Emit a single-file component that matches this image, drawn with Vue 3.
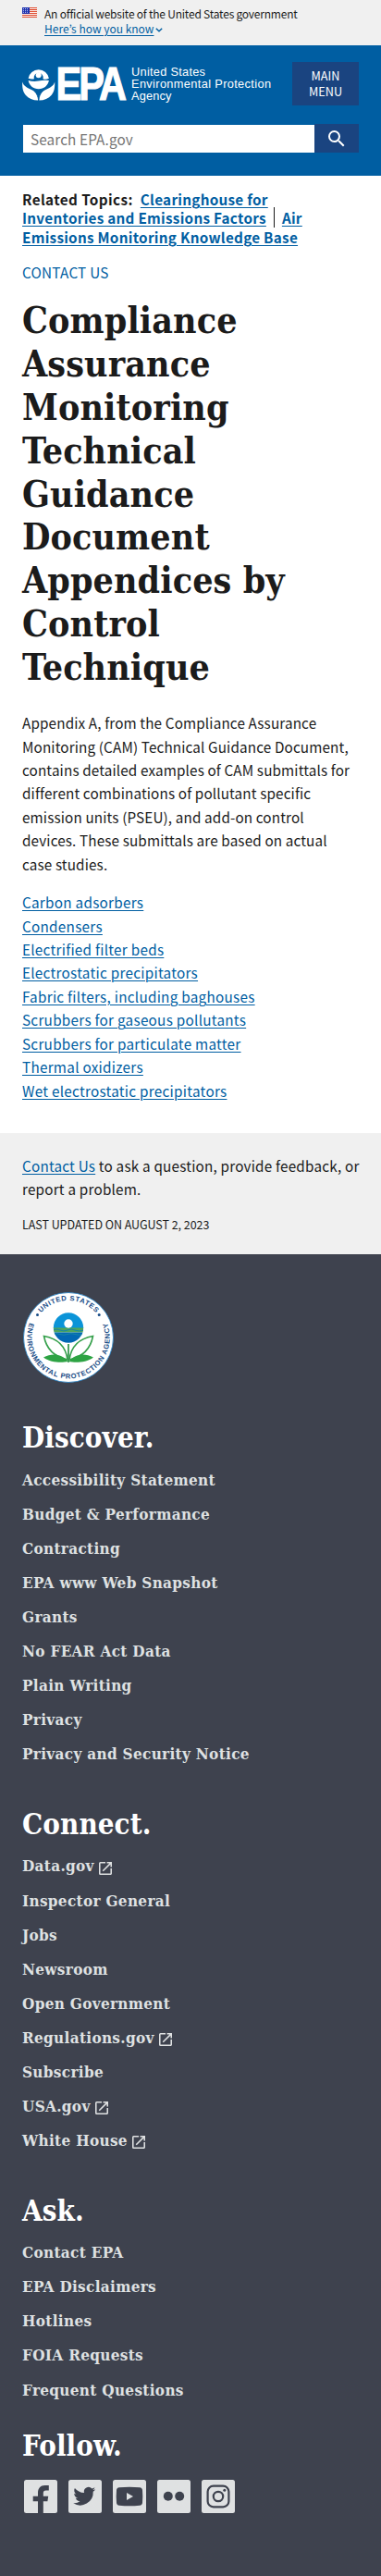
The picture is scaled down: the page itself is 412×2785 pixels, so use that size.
<script setup>
const appendices = [
  'Carbon adsorbers',
  'Condensers',
  'Electrified filter beds',
  'Electrostatic precipitators',
  'Fabric filters, including baghouses',
  'Scrubbers for gaseous pollutants',
  'Scrubbers for particulate matter',
  'Thermal oxidizers',
  'Wet electrostatic precipitators',
]

const footerGroups = [
  {
    title: 'Discover.',
    links: [
      { label: 'Accessibility Statement' },
      { label: 'Budget & Performance' },
      { label: 'Contracting' },
      { label: 'EPA www Web Snapshot' },
      { label: 'Grants' },
      { label: 'No FEAR Act Data' },
      { label: 'Plain Writing' },
      { label: 'Privacy' },
      { label: 'Privacy and Security Notice' },
    ],
  },
  {
    title: 'Connect.',
    links: [
      { label: 'Data.gov', external: true },
      { label: 'Inspector General' },
      { label: 'Jobs' },
      { label: 'Newsroom' },
      { label: 'Open Government' },
      { label: 'Regulations.gov', external: true },
      { label: 'Subscribe' },
      { label: 'USA.gov', external: true },
      { label: 'White House', external: true },
    ],
  },
  {
    title: 'Ask.',
    links: [
      { label: 'Contact EPA' },
      { label: 'EPA Disclaimers' },
      { label: 'Hotlines' },
      { label: 'FOIA Requests' },
      { label: 'Frequent Questions' },
    ],
  },
]
</script>

<template>
  <div class="page">
    <section class="banner">
      <svg class="flag" viewBox="0 0 16 11" width="16" height="11">
        <rect width="16" height="11" fill="#fff" />
        <path d="M0 .6h16M0 2.5h16M0 4.4h16M0 6.4h16M0 8.4h16M0 10.4h16" stroke="#db3e1f" stroke-width="1" />
        <rect width="8" height="6.9" fill="#1e33b1" />
        <path d="M1 1.5h6M1 3.4h6M1 5.3h6" stroke="#fff" stroke-width=".8" stroke-dasharray=".9 1.1" />
      </svg>
      <div class="banner-text">
        <p class="official">An official website of the United States government</p>
        <p>
          <a class="link" href="#">Here’s how you know</a>
          <svg class="chevron" viewBox="0 0 8 5" width="8" height="5"><path d="M.8.8 4 3.8 7.2.8" fill="none" stroke="#005ea2" stroke-width="1.4" /></svg>
        </p>
      </div>
    </section>

    <header class="header">
      <div class="brand-row">
        <div class="logo">
          <svg viewBox="0 0 36 36" width="36" height="36">
            <g fill="#fff">
              <path d="M6.600 11.800a11.300 11.300 0 0 1 22.300 0q-3.500 1.600-6.400.4a5 5 0 1 0-9.600 0q-3 .8-6.300-.4z" />
              <circle cx="17.700" cy="8.300" r="3" />
              <path d="M6.600 14q5.500 1.600 11 .6 6-1.400 11.300-.600c-1 5.500-5.400 9.300-11.100 9.300S7.600 19.500 6.600 14z" />
              <path d="M.2 15.500c1.500 5.200 5.500 6.200 9.800 8.500 4 2.200 6 4 7 8.200l.2 3.300C11.400 35.400 6.900 33.500 3.700 29.700.700 26.300-.1 21 .2 15.500z" />
              <path d="M35.200 15.500c-1.500 5.200-5.500 6.200-9.800 8.500-4 2.200-6 4-7 8.200l-.2 3.300c5.800-.1 10.300-2 13.500-5.800 3-3.400 3.800-8.700 3.500-14.200z" />
            </g>
            <path d="M4.500 18.800C12.500 23 16.800 28 17.700 35.500 18.600 28 22.900 23 30.900 18.800" fill="none" stroke="#005ea2" stroke-width=".9" />
          </svg>
          <svg class="logo-mark" viewBox="0 0 80 36" width="80" height="36">
            <text transform="translate(-.5 34.700) scale(.83 1)" x="0" y="0">EPA</text>
          </svg>
          <svg class="logo-name" viewBox="0 0 154 40" width="154" height="40">
            <text x="0" y="10.200" textLength="80">United States</text>
            <text x="0" y="22.700" textLength="151">Environmental Protection</text>
            <text x="0" y="35.600" textLength="43.500">Agency</text>
          </svg>
        </div>
        <button class="menu-btn">MAIN<br />MENU</button>
      </div>
      <div class="search">
        <div class="search-field">Search EPA.gov</div>
        <button class="search-btn" aria-label="Search">
          <svg viewBox="0 0 24 24" width="24" height="24" fill="#fff">
            <path d="M15.500 14h-.79l-.28-.27A6.471 6.471 0 0 0 16 9.500 6.500 6.500 0 1 0 9.500 16c1.610 0 3.090-.59 4.230-1.570l.27.28v.79l5 4.990L20.490 19l-4.990-5zm-6 0C7.010 14 5 11.990 5 9.500S7.010 5 9.500 5 14 7.010 14 9.500 11.990 14 9.500 14z" />
          </svg>
        </button>
      </div>
    </header>

    <main class="main">
      <p class="related">
        <span class="related-label">Related Topics:</span>
        <a class="link" href="#">Clearinghouse for<br />Inventories and Emissions Factors</a><span class="sep"></span><a class="link" href="#">Air<br />Emissions Monitoring Knowledge Base</a>
      </p>
      <p class="contact">CONTACT US</p>
      <h1>
        Compliance<br />Assurance<br />Monitoring<br />Technical<br />Guidance<br />Document<br />Appendices by<br />Control<br />Technique
      </h1>
      <p class="intro">
        Appendix A, from the Compliance Assurance<br />
        Monitoring (CAM) Technical Guidance Document,<br />
        contains detailed examples of CAM submittals for<br />
        different combinations of pollutant specific<br />
        emission units (PSEU), and add-on control<br />
        devices. These submittals are based on actual<br />
        case studies.
      </p>
      <ul class="appendices">
        <li v-for="item in appendices" :key="item"><a class="link" href="#">{{ item }}</a></li>
      </ul>
    </main>

    <section class="feedback">
      <p class="ask"><a class="link" href="#">Contact Us</a> to ask a question, provide feedback, or<br />report a problem.</p>
      <p class="updated">LAST UPDATED ON AUGUST 2, 2023</p>
    </section>

    <footer class="footer">
      <svg class="seal" viewBox="0 0 100 100" width="100" height="100">
        <defs>
          <path id="seal-top" d="M10 50a40 40 0 0 1 80 0" />
          <path id="seal-bottom" d="M11.400 27.200A44.700 44.700 0 1 0 88.600 27.200" />
          <clipPath id="seal-globe"><circle cx="50" cy="39.500" r="16.200" /></clipPath>
        </defs>
        <circle cx="50" cy="50" r="48.500" fill="#fff" stroke="#1b7cc4" stroke-width=".8" />
        <g class="seal-text">
          <text><textPath href="#seal-top" startOffset="50%" text-anchor="middle" textLength="67">UNITED STATES</textPath></text>
          <text><textPath href="#seal-bottom" startOffset="50%" text-anchor="middle" textLength="172">ENVIRONMENTAL PROTECTION AGENCY</textPath></text>
        </g>
        <circle cx="16.500" cy="25.500" r="1.500" fill="#174b86" />
        <circle cx="83.200" cy="25.500" r="1.500" fill="#174b86" />
        <g clip-path="url(#seal-globe)">
          <rect x="33" y="23" width="34" height="17" fill="#0b94d8" />
          <rect x="33" y="39.500" width="34" height="5" fill="#4fa65a" />
          <rect x="33" y="44.500" width="34" height="12" fill="#0268b4" />
          <path d="M33 42q4-2 8 0t8 0 8 0 10 0M33 46.500q4-1.500 8 0t8 0 8 0 10 0" fill="none" stroke="#1784a8" stroke-width="1" />
        </g>
        <circle cx="50" cy="35" r="4.700" fill="#fff" />
        <g fill="#fff" stroke="#35a04b" stroke-width="1.600">
          <path d="M49 74C47 59 38 51 23.500 48.500 26 62 35 71 49 74z" />
          <path d="M51 74C53 59 62 51 76.500 48.500 74 62 65 71 51 74z" />
        </g>
        <path d="M49.500 76C42 67 32 67 23 71.500 31 77.500 43 77.500 49.500 76zM50.500 76C58 67 68 67 77 71.500 69 77.500 57 77.500 50.500 76z" fill="#2da343" />
        <path d="M50 57v20" stroke="#2f9348" stroke-width="1.700" />
      </svg>

      <section v-for="group in footerGroups" :key="group.title" class="group">
        <h2>{{ group.title }}</h2>
        <ul>
          <li v-for="link in group.links" :key="link.label">
            <span>{{ link.label }}</span>
            <svg v-if="link.external" class="ext" viewBox="3 3 18 18" width="14" height="14" fill="#dfe1e2">
              <path d="M19 19H5V5h7V3H5a2 2 0 0 0-2 2v14a2 2 0 0 0 2 2h14c1.100 0 2-.9 2-2v-7h-2v7zM14 3v2h3.590l-9.830 9.830 1.410 1.410L19 6.410V10h2V3h-7z" />
            </svg>
          </li>
        </ul>
      </section>

      <section class="follow">
        <h2>Follow.</h2>
        <div class="socials">
          <svg viewBox="0 0 36 36" width="36" height="36">
            <rect width="36" height="36" rx="2.500" />
            <path class="cut" d="M15 36V23.300H9.700v-5.500H15v-3.600c0-5 2.700-8.200 7.600-8.200h4.200v5.400h-2.900c-2.300 0-3.100 1-3.100 3v3.400h5.400l-.8 5.500h-4.600V36z" />
          </svg>
          <svg viewBox="0 0 36 36" width="36" height="36">
            <rect width="36" height="36" rx="2.500" />
            <path class="cut" transform="translate(5.500 5.300)" d="M23.600 4.900c-.9.400-1.800.6-2.800.8 1-.6 1.800-1.600 2.200-2.700-1 .6-2 1-3.100 1.200a4.900 4.900 0 0 0-8.400 4.500C7.400 8.500 3.800 6.600 1.400 3.600.1 5.800.8 8.700 2.900 10.100c-.8 0-1.600-.2-2.200-.6 0 2.300 1.600 4.400 3.900 4.900-.7.200-1.500.2-2.200.1.600 2 2.400 3.400 4.600 3.400A9.900 9.900 0 0 1-.3 19.900a13.900 13.900 0 0 0 21.500-12.400c1-.7 1.800-1.600 2.400-2.600z" />
          </svg>
          <svg viewBox="0 0 36 36" width="36" height="36">
            <rect width="36" height="36" rx="2.500" />
            <path class="cut" d="M7 8.300q11-1 22 0c2 .2 2.800 1.200 3 3q.6 6.700 0 13.400c-.2 1.800-1 2.800-3 3q-11 1-22 0c-2-.2-2.800-1.200-3-3q-.6-6.700 0-13.400c.2-1.800 1-2.800 3-3z" />
            <path d="M15 14v8l7-4z" />
          </svg>
          <svg viewBox="0 0 36 36" width="36" height="36">
            <rect width="36" height="36" rx="2.500" />
            <circle class="cut" cx="11.800" cy="17.800" r="5" />
            <circle class="cut" cx="24.200" cy="17.800" r="5" />
          </svg>
          <svg viewBox="0 0 36 36" width="36" height="36">
            <rect width="36" height="36" rx="2.500" />
            <g class="ring">
              <rect x="6.600" y="6.600" width="22.800" height="22.800" rx="6.200" />
              <circle cx="18" cy="18" r="5.200" />
            </g>
            <circle class="cut" cx="24.800" cy="11.200" r="1.500" />
          </svg>
        </div>
      </section>
    </footer>
  </div>
</template>

<style>
body {
  background: #fff;
}
</style>

<style scoped>
.page {
  width: 412px;
  font-family: "Noto Sans CJK JP", "Open Sans", sans-serif;
  font-size: 15.270px;
  line-height: 25.440px;
  letter-spacing: 0.130px;
  color: #1b1b1b;
}
p,
h1,
h2,
ul {
  margin: 0;
  padding: 0;
}
ul {
  list-style: none;
}
button {
  border: 0;
  padding: 0;
  font-family: inherit;
  color: #fff;
  background: #1a4480;
}
.link {
  color: #005ea2;
  text-decoration: underline;
  text-decoration-thickness: 1px;
  text-underline-offset: 2px;
}
.banner {
  display: flex;
  gap: 8px;
  height: 49px;
  box-sizing: border-box;
  padding: 8px 24px 0;
  background: #f0f0f0;
}
.banner-text {
  margin-top: -1px;
  font-size: 12px;
  line-height: 16px;
  letter-spacing: 0;
  white-space: nowrap;
}
.official {
  letter-spacing: -0.220px;
}
.chevron {
  margin-left: 2px;
  vertical-align: 1px;
}
.header {
  height: 141px;
  box-sizing: border-box;
  padding: 18px 24px 0;
  background: #005ea2;
}
.brand-row {
  display: flex;
  justify-content: space-between;
}
.logo {
  display: flex;
  margin-top: 6px;
  letter-spacing: 0;
}
.logo svg {
  flex: none;
  overflow: visible;
}
.logo-mark {
  margin-left: 1px;
  font: bold 50px "Liberation Sans", Arial, sans-serif;
  letter-spacing: -3.500px;
  fill: #fff;
  stroke: #fff;
  stroke-width: 1.200;
}
.logo-name {
  margin: -1px -30px 0 1px;
  font: 12.800px "Liberation Sans", Arial, sans-serif;
  fill: #fff;
}
.menu-btn {
  flex: none;
  width: 72px;
  height: 47px;
  font-size: 12.700px;
  line-height: 16.300px;
}
.search {
  display: flex;
  margin-top: 20px;
  height: 31px;
}
.search-field {
  flex: 1;
  margin: 1px 0 0 1px;
  padding-left: 8px;
  background: #fff;
  color: #757575;
  line-height: 30px;
}
.search-btn {
  display: flex;
  width: 48px;
  align-items: center;
  justify-content: center;
}
.main {
  height: 1035px;
  box-sizing: border-box;
  padding: 15px 24px 0;
  white-space: nowrap;
}
.related {
  height: 61px;
  font-weight: bold;
  line-height: 20.400px;
  letter-spacing: 0.270px;
}
.related-label {
  margin-right: 8px;
  letter-spacing: 0.400px;
}
.sep {
  margin: 0 8px;
  border-left: 1px solid #1b1b1b;
}
.contact {
  margin-top: 18px;
  line-height: 20.400px;
  color: #005ea2;
  letter-spacing: 0.250px;
}
h1 {
  margin-top: 18.500px;
  font: bold 39px/46.900px "DejaVu Serif Condensed", "DejaVu Serif", serif;
  font-stretch: condensed;
  letter-spacing: 0.100px;
}
.intro {
  margin-top: 24px;
}
.appendices {
  margin-top: 16px;
  letter-spacing: 0.270px;
}
.feedback {
  height: 131px;
  box-sizing: border-box;
  padding: 23px 24px 0;
  background: #f0f0f0;
  letter-spacing: 0.200px;
  white-space: nowrap;
}
.updated {
  margin-top: 14px;
  font-size: 12.500px;
  line-height: 21px;
  letter-spacing: -0.050px;
}
.footer {
  height: 1429px;
  box-sizing: border-box;
  padding: 40px 24px 0;
  background: #3e424e;
  color: #dfe1e2;
  font-family: "DejaVu Serif Condensed", "DejaVu Serif", serif;
  font-stretch: condensed;
  font-weight: bold;
}
.seal {
  display: block;
}
.seal-text {
  font: bold 7.600px "Liberation Sans", Arial, sans-serif;
  letter-spacing: 0;
  fill: #174b86;
}
h2 {
  font-size: 31px;
  line-height: 37px;
  letter-spacing: 0.100px;
  color: #fff;
}
.group {
  margin-top: 47.500px;
}
.seal + .group {
  margin-top: 39.700px;
}
.seal + .group ul {
  margin-top: 17.100px;
}
.group ul {
  display: flex;
  flex-direction: column;
  gap: 16.700px;
  margin-top: 16.200px;
}
.group li {
  display: flex;
  align-items: center;
  gap: 5px;
  height: 20.400px;
  font-size: 17px;
  line-height: 20.400px;
  letter-spacing: 0.320px;
  white-space: nowrap;
}
.ext {
  margin-top: 4px;
}
.follow {
  margin-top: 31.800px;
}
.socials {
  display: flex;
  gap: 12px;
  margin: 18.500px 0 0 2px;
  fill: #dfe1e2;
}
.cut {
  fill: #3e424e;
}
.ring {
  fill: none;
  stroke: #3e424e;
  stroke-width: 2.200;
}
</style>
